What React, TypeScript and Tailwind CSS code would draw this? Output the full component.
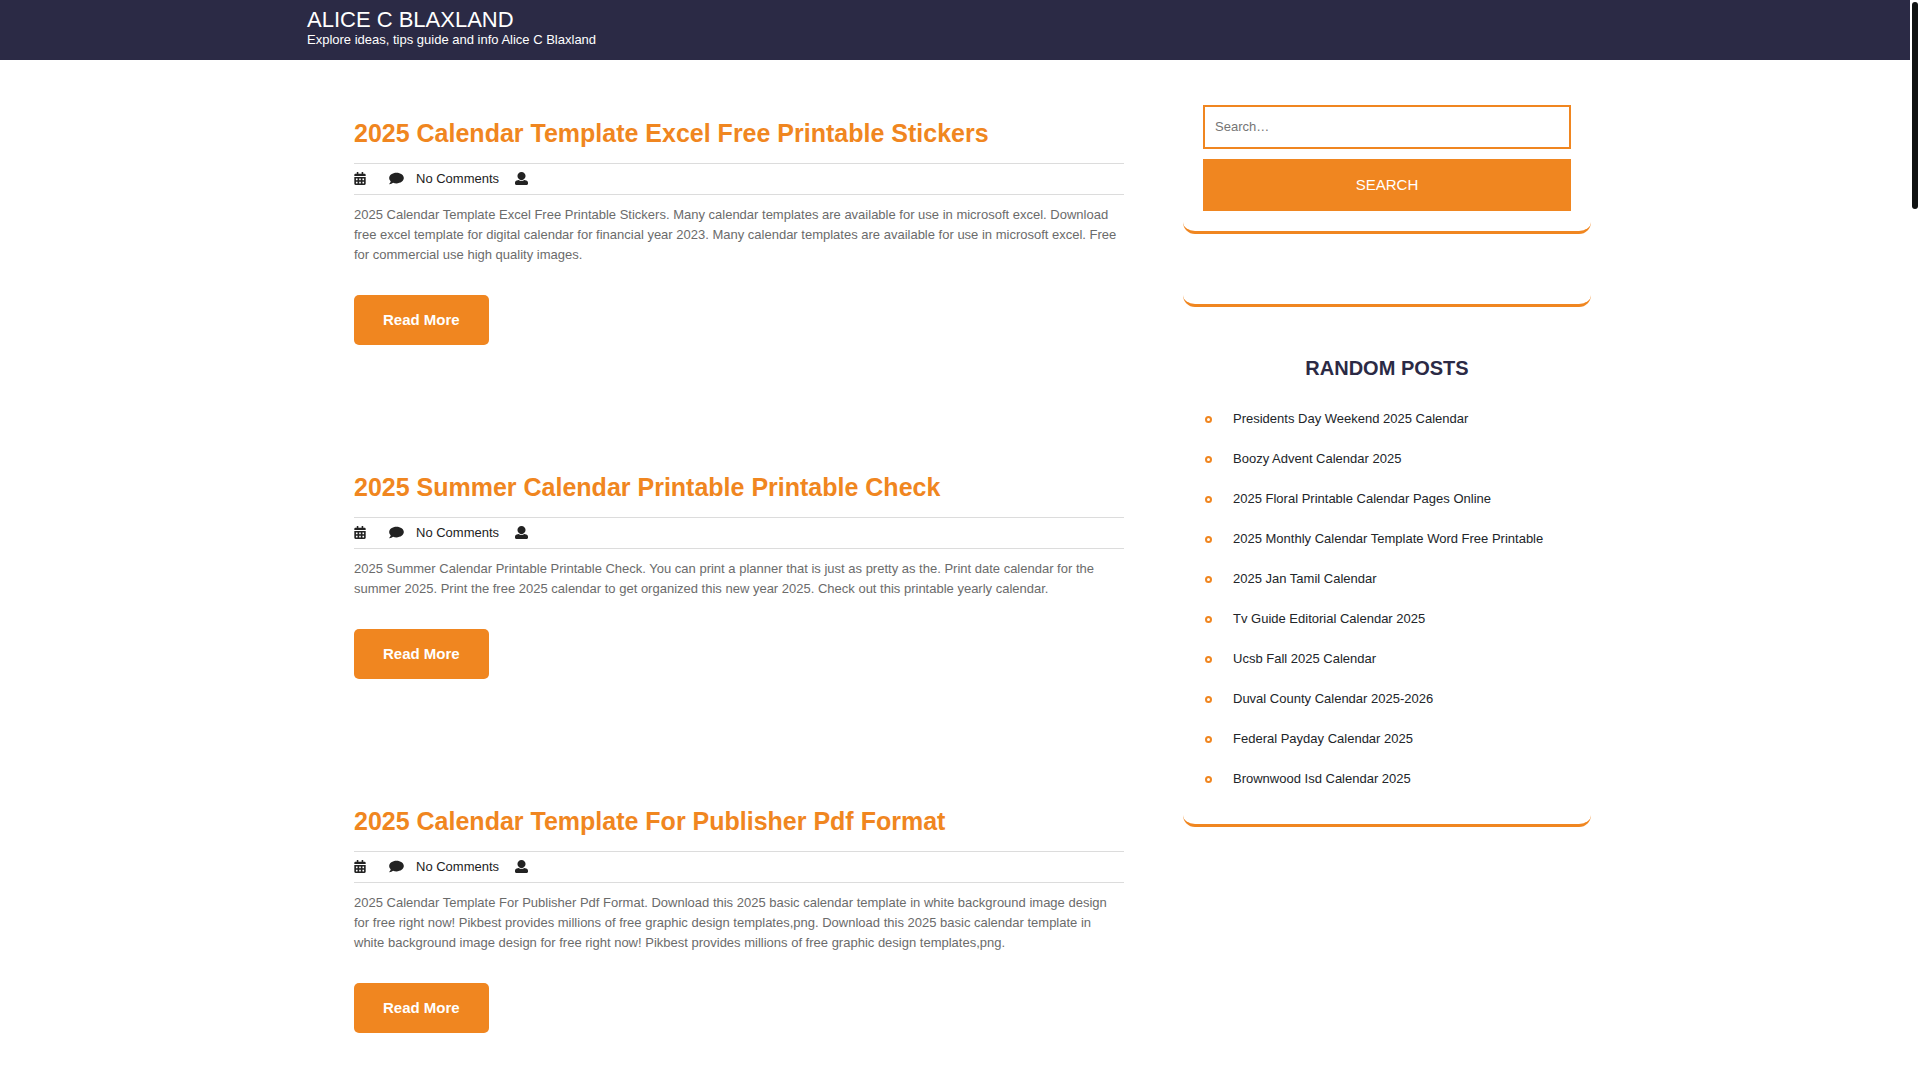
import { FaCalendarAlt } from "react-icons/fa";

type Post = { title: string; excerpt: string };

const posts: Post[] = [
  {
    title: "2025 Calendar Template Excel Free Printable Stickers",
    excerpt:
      "2025 Calendar Template Excel Free Printable Stickers. Many calendar templates are available for use in microsoft excel. Download free excel template for digital calendar for financial year 2023. Many calendar templates are available for use in microsoft excel. Free for commercial use high quality images.",
  },
  {
    title: "2025 Summer Calendar Printable Printable Check",
    excerpt:
      "2025 Summer Calendar Printable Printable Check. You can print a planner that is just as pretty as the. Print date calendar for the summer 2025. Print the free 2025 calendar to get organized this new year 2025. Check out this printable yearly calendar.",
  },
  {
    title: "2025 Calendar Template For Publisher Pdf Format",
    excerpt:
      "2025 Calendar Template For Publisher Pdf Format. Download this 2025 basic calendar template in white background image design for free right now! Pikbest provides millions of free graphic design templates,png. Download this 2025 basic calendar template in white background image design for free right now! Pikbest provides millions of free graphic design templates,png.",
  },
];

const randomPosts = [
  "Presidents Day Weekend 2025 Calendar",
  "Boozy Advent Calendar 2025",
  "2025 Floral Printable Calendar Pages Online",
  "2025 Monthly Calendar Template Word Free Printable",
  "2025 Jan Tamil Calendar",
  "Tv Guide Editorial Calendar 2025",
  "Ucsb Fall 2025 Calendar",
  "Duval County Calendar 2025-2026",
  "Federal Payday Calendar 2025",
  "Brownwood Isd Calendar 2025",
];

function CommentIcon() {
  return (
    <svg viewBox="0 0 576 512" className="mb-0.5 h-[13px] w-[15px]" fill="currentColor" aria-hidden="true">
      <path d="M576 240c0 115-129 208-288 208-48.3 0-93.9-8.6-133.9-23.8-40.3 31.2-89.8 50.3-142.4 55.7-5.2.6-10.2-2.8-11.5-7.7-1.3-5 2.7-8.1 6.6-11.8 19.3-18.4 42.7-32.8 51.9-94.6C21.9 330.9 0 287.3 0 240 0 125.1 129 32 288 32s288 93.1 288 208z" />
    </svg>
  );
}

function UserIcon() {
  return (
    <svg viewBox="0 0 512 512" className="mb-0.5 size-[13px]" fill="currentColor" aria-hidden="true">
      <path d="M256 0c88.366 0 160 71.634 160 160s-71.634 160-160 160S96 248.366 96 160 167.634 0 256 0zm183.283 333.821l-71.313-17.828c-74.923 53.89-165.738 41.864-223.94 0l-71.313 17.828C29.981 344.505 0 382.903 0 426.955V464c0 26.51 21.49 48 48 48h416c26.51 0 48-21.49 48-48v-37.045c0-44.052-29.981-82.45-72.717-93.134z" />
    </svg>
  );
}

function PostCard({ title, excerpt }: Post) {
  return (
    <article>
      <h2 className="text-[25px] leading-[30px] font-bold text-[#f08620]">
        <a href="#">{title}</a>
      </h2>
      <div className="mt-[15px] flex h-8 items-center border-y border-[#dcdcdc] text-[#222]">
        <FaCalendarAlt className="mb-0.5 h-[13px] w-3" aria-hidden="true" />
        <span className="ml-[23px] flex items-center gap-3">
          <CommentIcon />
          No Comments
        </span>
        <span className="ml-4">
          <UserIcon />
        </span>
      </div>
      <p className="mt-[10px] leading-5 text-[#6b6b6b]">{excerpt}</p>
      <a
        href="#"
        className="mt-[30px] inline-block rounded-[5px] bg-[#f08620] px-[29px] text-[15px] leading-[50px] font-bold text-white"
      >
        Read More
      </a>
    </article>
  );
}

export default function App() {
  return (
    <div className="min-h-screen bg-white pr-[10px] font-['Liberation_Sans',Arial,sans-serif] text-[13px]">
      <header className="h-[60px] bg-[#2b2a45] text-white">
        <div className="mx-auto max-w-[1320px] px-3 pt-2">
          <h1 className="text-[22px] leading-6">
            <a href="#">ALICE C BLAXLAND</a>
          </h1>
          <p className="leading-4">Explore ideas, tips guide and info Alice C Blaxland</p>
        </div>
      </header>

      <div className="mx-auto flex max-w-[1320px] items-start pt-[45px] pr-6 pl-[59px]">
        <main className="mt-[13px] mr-[59px] flex flex-1 flex-col gap-[127px]">
          {posts.map((post) => (
            <PostCard key={post.title} {...post} />
          ))}
        </main>

        <aside className="w-[408px] shrink-0">
          <form className="rounded-[12px] border-b-3 border-[#f08620] px-5 pb-5" onSubmit={(e) => e.preventDefault()}>
            <input
              type="search"
              aria-label="Search"
              placeholder="Search…"
              className="block h-11 w-full border-2 border-[#f08620] px-[10px] pb-0.5 text-[#222] placeholder:text-[#757575]"
            />
            <button type="submit" className="mt-[10px] h-13 w-full bg-[#f08620] text-[15px] text-white">
              SEARCH
            </button>
          </form>
          <div className="mt-[30px] h-[43px] rounded-[12px] border-b-3 border-[#f08620]" />
          <section className="mt-[46px] rounded-[12px] border-b-3 border-[#f08620] px-5 pb-[25px]">
            <h3 className="text-center text-xl leading-[30px] font-bold text-[#2b2a45]">RANDOM POSTS</h3>
            <ul className="mt-4">
              {randomPosts.map((title) => (
                <li key={title} className="flex h-10 items-center">
                  <span className="ml-[2px] size-[7px] rounded-full border-2 border-[#f08620]" />
                  <a href="#" className="ml-[21px] text-[#212529]">
                    {title}
                  </a>
                </li>
              ))}
            </ul>
          </section>
        </aside>
      </div>

      <div className="fixed top-[2px] right-[2px] h-[207px] w-[6px] rounded-full bg-[#101212]" aria-hidden="true" />
    </div>
  );
}
